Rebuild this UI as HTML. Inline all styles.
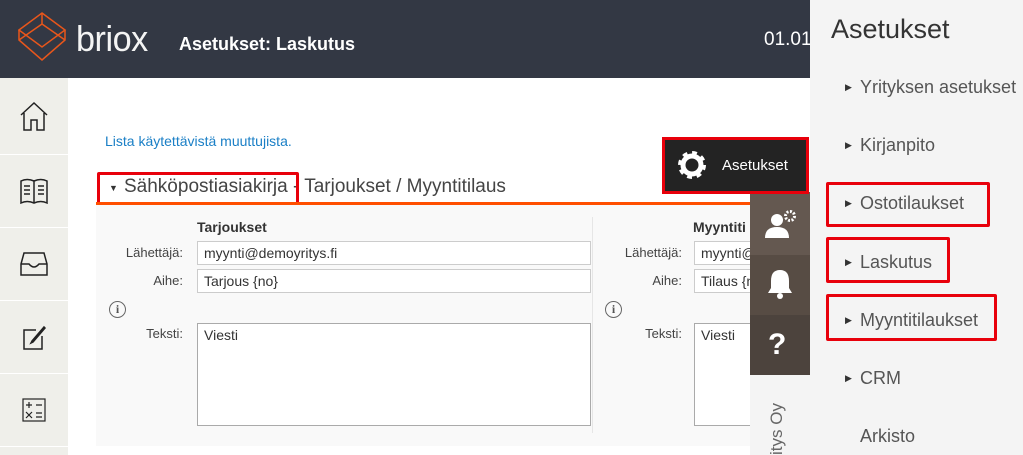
<!DOCTYPE html><html><head><meta charset="utf-8"><style>
*{box-sizing:border-box;margin:0;padding:0}
html,body{width:1023px;height:455px;overflow:hidden}
body{background:#fff;font-family:"Liberation Sans",sans-serif}
#w{position:relative;width:1023px;height:455px;overflow:hidden}
.a{position:absolute}
.hdr{left:0;top:0;width:810px;height:78px;background:#333844}
.side{left:0;top:78px;width:68px;height:377px;background:#efefea}
.cell{position:absolute;left:0;width:68px;border-bottom:1px solid #fff;display:flex;align-items:center;justify-content:center}
.lbl{font-size:13px;color:#444;text-align:right;width:80px}
.inp{border:1px solid #ccc;background:#fff;font-size:14px;color:#333;padding:3px 6px;height:24px;white-space:nowrap;overflow:hidden}
.rp{left:810px;top:0;width:213px;height:455px;background:#f4f4f4}
.mi{position:absolute;left:860px;font-size:18px;color:#555}
.tri{position:absolute;left:845px;font-size:9px;color:#333}
.rb{position:absolute;border:3px solid #e8000b;border-radius:2px}
</style></head><body><div id="w">
<div class="a hdr"></div>
<svg class="a" style="left:18px;top:12px" width="50" height="52" viewBox="0 0 50 52" fill="none" stroke="#e8561b" stroke-width="1.5">
<path d="M24 1 L47 18 L24 35 L1 18 Z"/><path d="M1 18 V28 L24 48 L47 28 V18"/><path d="M1 28 L24 12 M47 28 L24 12 M24 1 V12"/></svg>
<div class="a" style="left:76px;top:18px;font-size:36px;color:#f4f4f4;font-family:'Liberation Sans',sans-serif;letter-spacing:-0.5px;transform:scaleX(0.95);transform-origin:0 0">briox</div>
<div class="a" style="left:179px;top:34px;font-size:18px;color:#fff;font-weight:bold">Asetukset: Laskutus</div>
<div class="a" style="left:764px;top:29px;font-size:19px;color:#fff">01.01</div>
<div class="a side">
<div class="cell" style="top:0;height:77px"><svg width="28" height="30" viewBox="0 0 28 30" fill="none" stroke="#222" stroke-width="1.5"><path d="M1 14 L14 2 L27 14 M4 12 V29 H11 V19 H17 V29 H24 V12"/></svg></div>
<div class="cell" style="top:77px;height:73px"><svg width="28" height="26" viewBox="0 0 28 26" fill="none" stroke="#222" stroke-width="1.5"><path d="M1 3 Q7 0 14 3 Q21 0 27 3 V25 Q21 22 14 25 Q7 22 1 25 Z M14 3 V25 M4 8 H10 M4 12 H10 M4 16 H10 M18 8 H24 M18 12 H24 M18 16 H24"/></svg></div>
<div class="cell" style="top:150px;height:73px"><svg width="28" height="24" viewBox="0 0 28 24" fill="none" stroke="#222" stroke-width="1.5"><path d="M4 1 H24 L27 12 V23 H1 V12 Z M1 12 H9 Q14 18 19 12 H27"/></svg></div>
<div class="cell" style="top:223px;height:73px"><svg width="24" height="26" viewBox="0 0 24 26" fill="none" stroke="#222" stroke-width="1.5"><path d="M14 6 H2 V25 H20 V12 M10 17 L22 3 L23 4 L11 18 L9 19 Z"/></svg></div>
<div class="cell" style="top:296px;height:73px"><svg width="24" height="24" viewBox="0 0 24 24" fill="none" stroke="#222" stroke-width="1.2"><rect x="1" y="1" width="22" height="22"/><path d="M4 7 H10 M7 4 V10 M14 7 H20 M4 14 L10 20 M10 14 L4 20 M14 15 H20 M14 19 H20"/></svg></div>
</div>
<div class="a" style="left:105px;top:133px;font-size:14px;color:#1a7fc6">Lista käytettävistä muuttujista.</div>
<div class="a" style="left:109px;top:183px;font-size:9px;color:#333">▼</div>
<div class="a" style="left:124px;top:176px;font-size:19px;color:#444">Sähköpostiasiakirja - Tarjoukset / Myyntitilaus</div>
<div class="rb" style="left:97px;top:172px;width:202px;height:33px"></div>
<div class="a" style="left:96px;top:202px;width:655px;height:3px;background:#ff4f00"></div>
<div class="a" style="left:96px;top:205px;width:655px;height:241px;background:#f9f9f9"></div>
<div class="a" style="left:592px;top:217px;width:1px;height:216px;background:#e6e6e6"></div>
<div class="a" style="left:197px;top:219px;font-size:14px;font-weight:bold;color:#333">Tarjoukset</div>
<div class="a lbl" style="left:103px;top:245px">Lähettäjä:</div>
<div class="a inp" style="left:197px;top:241px;width:394px">myynti@demoyritys.fi</div>
<div class="a lbl" style="left:103px;top:273px">Aihe:</div>
<div class="a inp" style="left:197px;top:269px;width:394px">Tarjous {no}</div>
<div class="a" style="left:109px;top:301px;width:17px;height:17px;border:1.5px solid #666;border-radius:50%;font:bold 12px 'Liberation Serif',serif;color:#555;text-align:center;line-height:14px">i</div>
<div class="a lbl" style="left:103px;top:326px">Teksti:</div>
<div class="a inp" style="left:197px;top:323px;width:394px;height:103px;border-color:#aaa">Viesti</div>
<div class="a" style="left:693px;top:219px;font-size:14px;font-weight:bold;color:#333">Myyntiti</div>
<div class="a lbl" style="left:602px;top:245px">Lähettäjä:</div>
<div class="a inp" style="left:694px;top:241px;width:60px">myynti@</div>
<div class="a lbl" style="left:602px;top:273px">Aihe:</div>
<div class="a inp" style="left:694px;top:269px;width:60px">Tilaus {no}</div>
<div class="a" style="left:605px;top:301px;width:17px;height:17px;border:1.5px solid #666;border-radius:50%;font:bold 12px 'Liberation Serif',serif;color:#555;text-align:center;line-height:14px">i</div>
<div class="a lbl" style="left:602px;top:326px">Teksti:</div>
<div class="a inp" style="left:694px;top:323px;width:60px;height:103px;border-color:#aaa">Viesti</div>
<div class="a" style="left:750px;top:192px;width:60px;height:263px;background:#f4f4f4"></div>
<div class="a" style="left:767px;top:455px;transform:rotate(-90deg);transform-origin:0 0;font-size:17px;color:#666;white-space:nowrap">itys Oy</div>
<div class="a" style="left:750px;top:192px;width:60px;height:63px;background:#645850"></div>
<div class="a" style="left:750px;top:255px;width:60px;height:60px;background:#574c44"></div>
<div class="a" style="left:750px;top:315px;width:60px;height:60px;background:#4c433d"></div>
<svg class="a" style="left:765px;top:208px" width="32" height="32" viewBox="0 0 32 32" fill="#fff"><circle cx="12" cy="12" r="6"/><path d="M0 30 Q0 19 12 19 Q24 19 24 30 Z"/><circle cx="25" cy="8" r="4.5" fill="none" stroke="#fff" stroke-width="3" stroke-dasharray="2 1.5"/></svg>
<svg class="a" style="left:766px;top:268px" width="28" height="32" viewBox="0 0 28 32" fill="#fff"><path d="M14 2 Q5 2 5 13 V20 L2 25 H26 L23 20 V13 Q23 2 14 2 Z"/><circle cx="14" cy="28" r="3"/></svg>
<div class="a" style="left:768px;top:328px;font-size:30px;font-weight:bold;color:#fff">?</div>
<div class="a" style="left:662px;top:137px;width:147px;height:57px;background:#e8000b"></div>
<div class="a" style="left:665px;top:140px;width:141px;height:51px;background:#232323"></div>
<svg class="a" style="left:676px;top:149px" width="32" height="32" viewBox="0 0 32 32"><circle cx="16" cy="16" r="11" fill="none" stroke="#fff" stroke-width="6" stroke-dasharray="4.3 4.3"/><circle cx="16" cy="16" r="9" fill="none" stroke="#fff" stroke-width="5"/></svg>
<div class="a" style="left:722px;top:157px;font-size:15px;color:#fff">Asetukset</div>
<div class="a rp"></div>
<div class="a" style="left:831px;top:14px;font-size:27px;color:#333;font-weight:300">Asetukset</div>
<div class="tri" style="top:82px">▶</div><div class="mi" style="top:77px">Yrityksen asetukset</div>
<div class="tri" style="top:140px">▶</div><div class="mi" style="top:135px">Kirjanpito</div>
<div class="tri" style="top:198px">▶</div><div class="mi" style="top:193px">Ostotilaukset</div>
<div class="tri" style="top:257px">▶</div><div class="mi" style="top:252px">Laskutus</div>
<div class="tri" style="top:315px">▶</div><div class="mi" style="top:310px">Myyntitilaukset</div>
<div class="tri" style="top:373px">▶</div><div class="mi" style="top:368px">CRM</div>
<div class="mi" style="top:426px">Arkisto</div>
<div class="rb" style="left:826px;top:182px;width:164px;height:45px"></div>
<div class="rb" style="left:826px;top:237px;width:124px;height:46px"></div>
<div class="rb" style="left:826px;top:294px;width:171px;height:47px"></div>
</div></body></html>
